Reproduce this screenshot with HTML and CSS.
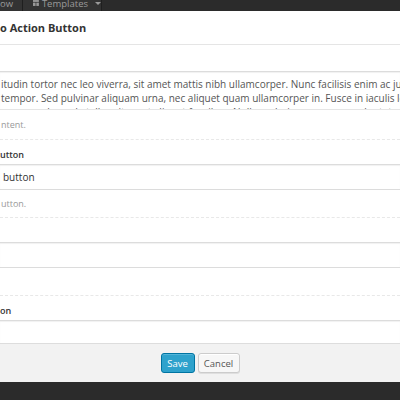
FILE: index.html
```html
<!DOCTYPE html>
<html>
<head>
<meta charset="utf-8">
<link rel="stylesheet" href="styles.css">
</head>
<body>
<div class="topbar">
  <div class="tb-inner">
    <span class="tb-btn tb-first">ow</span>
    <span class="tb-btn tb-templates">
      <svg class="tb-icon" width="8" height="8" viewBox="0 0 8 8"><rect x="0" y="0" width="8" height="2.5" fill="#999"/><rect x="0" y="3.5" width="3.5" height="4.5" fill="#999"/><rect x="4.5" y="3.5" width="3.5" height="4.5" fill="#999"/></svg>
      Templates
      <span class="caret"></span>
    </span>
  </div>
</div>
<div class="modal">
  <div class="head"><h1 class="title">o Action Button</h1></div>
  <div class="body">
    <div class="label-row"></div>
    <div class="textarea">
      <p>itudin tortor nec leo viverra, sit amet mattis nibh ullamcorper. Nunc facilisis enim ac justo</p>
      <p>tempor. Sed pulvinar aliquam urna, nec aliquet quam ullamcorper in. Fusce in iaculis lorem</p>
      <p>usque malesuada tellus sit amet aliquet faucibus. Nulla scelerisque semper vulputate.</p>
    </div>
    <div class="desc">ntent.</div>
    <div class="field">
      <div class="label-row"><span class="label">utton</span></div>
      <div class="input">button</div>
      <div class="desc">utton.</div>
    </div>
    <div class="field">
      <div class="label-row"></div>
      <div class="input"></div>
      <div class="desc"></div>
    </div>
    <div class="field">
      <div class="label-row"><span class="label">on</span></div>
      <div class="input"></div>
    </div>
  </div>
  <div class="foot">
    <button class="btn btn-save">Save</button>
    <button class="btn btn-cancel">Cancel</button>
  </div>
</div>
</body>
</html>
```
FILE: styles.css
```css
html, body {
  margin: 0;
  padding: 0;
  background: #2b2b2b;
  font-family: "Open Sans", "Liberation Sans", sans-serif;
  overflow: hidden;
}
.topbar {
  height: 11px;
  overflow: hidden;
  background: #2b2b2b;
}
.tb-inner {
  display: flex;
  margin-top: -5px;
  height: 16px;
}
.tb-btn {
  display: flex;
  align-items: center;
  color: #9a9a9a;
  font-size: 9.5px;
  height: 16px;
  border-right: 1px solid #1f1f1f;
  box-sizing: border-box;
}
.tb-first {
  width: 23px;
  background: #333;
}
.tb-templates {
  width: 79px;
  padding-left: 10px;
  gap: 3px;
  background: #333;
}
.tb-icon {
  display: block;
}
.caret {
  width: 0;
  height: 0;
  border-left: 3px solid transparent;
  border-right: 3px solid transparent;
  border-top: 3px solid #9a9a9a;
  margin-left: 4px;
}
.modal {
  background: #fff;
}
.head {
  height: 33px;
  border-bottom: 1px solid #e5e5e5;
  display: flex;
  align-items: center;
}
.title {
  margin: 0;
  font-size: 11px;
  font-weight: 700;
  color: #333;
}
.body {
  height: 298px;
  overflow: hidden;
}
.label-row {
  height: 24px;
  box-sizing: border-box;
  padding-top: 6px;
  line-height: 12px;
}
.body > .label-row {
  height: 26px;
}
.label {
  font-size: 9px;
  font-weight: 600;
  color: #333;
}
.textarea {
  height: 39px;
  box-sizing: border-box;
  border-top: 1px solid #dcdcdc;
  border-bottom: 1px solid #e5e5e5;
  box-shadow: inset 0 1px 1px rgba(0, 0, 0, 0.06);
  padding-top: 5px;
  overflow: hidden;
  white-space: nowrap;
  font-size: 10px;
  line-height: 14px;
  color: #555;
}
.textarea p {
  margin: 0 0 0 1px;
}
.desc {
  height: 30px;
  box-sizing: border-box;
  border-bottom: 1px dashed #e8e8e8;
  display: flex;
  align-items: center;
  padding-left: 1px;
  font-size: 9px;
  color: #999;
}
.field .desc {
  height: 28px;
}
.input {
  height: 26px;
  box-sizing: border-box;
  border-top: 1px solid #dcdcdc;
  border-bottom: 1px solid #dcdcdc;
  box-shadow: inset 0 1px 1px rgba(0, 0, 0, 0.06);
  display: flex;
  align-items: center;
  padding-left: 3px;
  font-size: 10px;
  color: #333;
}
.foot {
  border-top: 1px solid #dddddd;
  background: #f2f2f2;
  height: 38px;
  display: flex;
  justify-content: center;
  align-items: center;
  gap: 3px;
}
.btn {
  height: 20px;
  box-sizing: border-box;
  border-radius: 3px;
  font-family: "Open Sans", "Liberation Sans", sans-serif;
  font-size: 9.5px;
  padding: 0;
  margin: 0;
  cursor: pointer;
}
.btn-save {
  background: #2ea2cc;
  border: 1px solid #0074a2;
  color: #fff;
  box-shadow: inset 0 1px 0 rgba(120, 200, 230, 0.5);
  width: 34px;
}
.btn-cancel {
  background: #f7f7f7;
  border: 1px solid #cccccc;
  color: #555;
  box-shadow: inset 0 1px 0 #fff, 0 1px 0 rgba(0, 0, 0, 0.08);
  width: 42px;
}
```
